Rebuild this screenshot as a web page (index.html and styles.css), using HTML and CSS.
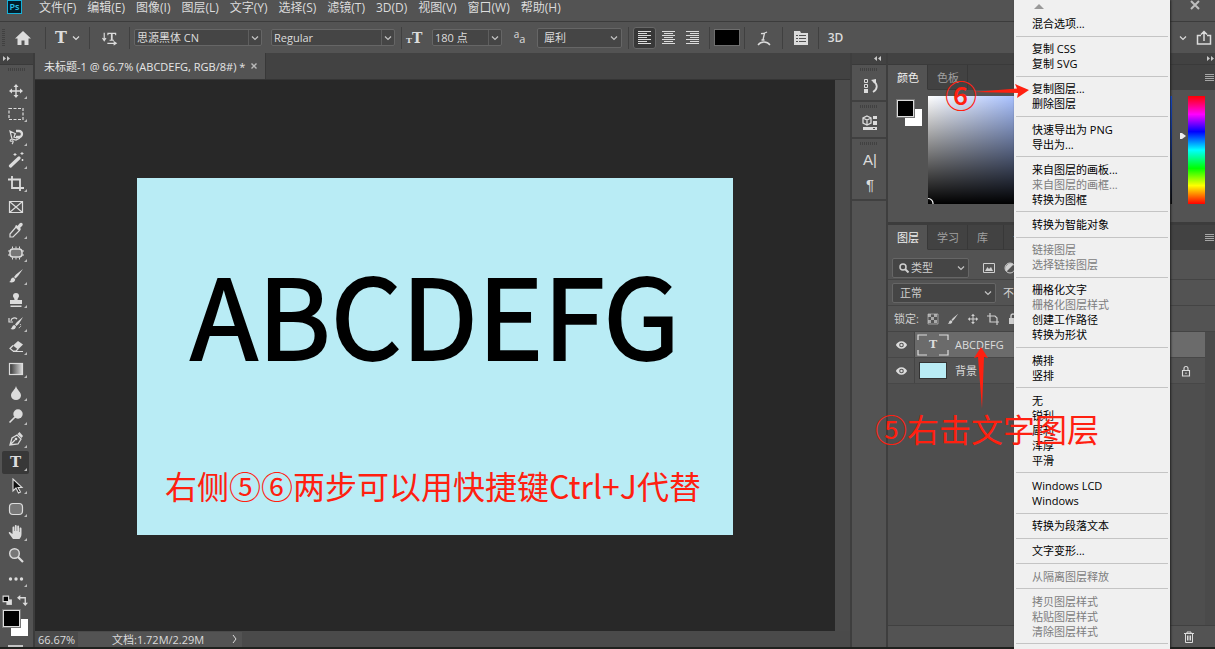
FILE: index.html
```html
<!DOCTYPE html>
<html lang="zh-CN">
<head>
  <meta charset="UTF-8">
  <meta name="viewport" content="width=device-width, initial-scale=1.0">
  <title>未标题-1 @ 66.7%</title>
  <link rel="stylesheet" href="styles.css">
</head>
<body>
  <svg class="defs" aria-hidden="true">
    <symbol id="chevron" viewBox="0 0 8 8"><path d="M1 2.5l3 3 3-3" fill="none" stroke="currentColor" stroke-width="1.2"/></symbol>
    <symbol id="menu-lines" viewBox="0 0 9 7"><path d="M0 .5h9M0 2.5h9M0 4.5h9M0 6.5h9" stroke="currentColor"/></symbol>
    <symbol id="move" viewBox="0 0 16 16"><path d="M8 1l2.5 3H8.7v3.3H12V5.5L15 8l-3 2.5V8.7H8.7V12h1.8L8 15l-2.5-3h1.8V8.7H4v1.8L1 8l3-2.5v1.8h3.3V4H5.5z"/></symbol>
    <symbol id="brush" viewBox="0 0 16 16"><path d="M15 1L8 6.500 6 9l1.500 1.500L10 8zM5.500 9.500c-2 0-2.500 1.500-2.800 2.800-.2.900-.7 1.400-1.700 1.700 3 .9 6 .4 6.200-2.700z"/></symbol>
    <symbol id="eye" viewBox="0 0 14 10"><path fill-rule="evenodd" d="M7 1C4 1 2 3 1 5c1 2 3 4 6 4s5-2 6-4c-1-2-3-4-6-4zm0 1.500a2.500 2.500 0 110 5 2.500 2.500 0 010-5z"/><circle cx="7" cy="5" r="1.300"/></symbol>
    <symbol id="lock" viewBox="0 0 12 12"><path d="M2.500 5.500h7v5.500h-7zM4 5.500V3.500a2 2 0 014 0v2M6 7.500v1.500" fill="none" stroke="currentColor" stroke-width="1.100"/></symbol>
  </svg>

  <header class="menubar">
    <span class="logo">Ps</span>
    <nav class="menus">
      <button>文件(F)</button>
      <button>编辑(E)</button>
      <button>图像(I)</button>
      <button>图层(L)</button>
      <button>文字(Y)</button>
      <button>选择(S)</button>
      <button>滤镜(T)</button>
      <button>3D(D)</button>
      <button>视图(V)</button>
      <button>窗口(W)</button>
      <button>帮助(H)</button>
    </nav>
    <button class="window-close" aria-label="关闭"><svg viewBox="0 0 10 10"><path d="M1 1l8 8M9 1L1 9" stroke="currentColor" stroke-width="2"/></svg></button>
  </header>

  <div class="options">
    <span class="grip-v"></span>
    <button class="opt home" aria-label="主页"><svg viewBox="0 0 16 16"><path d="M8 1L0 8.500h2.500V15h4v-4.500h3V15h4V8.500H16z"/></svg></button>
    <button class="opt type-tool"><span class="serif">T</span><svg class="chev"><use href="#chevron"/></svg></button>
    <button class="opt orient" aria-label="切换文本取向"><svg viewBox="0 0 18 16"><path d="M2.500 2v8M.5 8l2 3 2-3M6 14h9M13 12l3 2-3 2" fill="none" stroke="currentColor" stroke-width="1.300"/><path d="M6 2h10v3h-1l-.5-1.500H12V10h1.500v1h-5v-1H10V3.500H7.500L7 5H6z"/></svg></button>
    <span class="field font-family"><select aria-label="字体"><option>思源黑体 CN</option></select><svg class="chev"><use href="#chevron"/></svg></span>
    <span class="field font-style"><select aria-label="字体样式"><option>Regular</option></select><svg class="chev"><use href="#chevron"/></svg></span>
    <span class="opt size-icon"><small>T</small><span class="serif">T</span></span>
    <span class="field font-size"><select aria-label="字体大小"><option>180 点</option></select><svg class="chev"><use href="#chevron"/></svg></span>
    <span class="opt-plain"><sup>a</sup>a</span>
    <span class="field tall antialias"><select aria-label="消除锯齿"><option>犀利</option></select><svg class="chev"><use href="#chevron"/></svg></span>
    <div class="aligns">
      <button class="on" aria-label="左对齐"><svg viewBox="0 0 14 13"><path d="M0 .5h13M0 2.500h9M0 4.500h13M0 6.500h9M0 8.500h13M0 10.500h9M0 12.500h13" stroke="currentColor"/></svg></button>
      <button aria-label="居中对齐"><svg viewBox="0 0 14 13"><path d="M0 .5h13M2 2.500h9M0 4.500h13M2 6.500h9M0 8.500h13M2 10.500h9M0 12.500h13" stroke="currentColor"/></svg></button>
      <button aria-label="右对齐"><svg viewBox="0 0 14 13"><path d="M0 .5h13M4 2.500h9M0 4.500h13M4 6.500h9M0 8.500h13M4 10.500h9M0 12.500h13" stroke="currentColor"/></svg></button>
    </div>
    <div class="color-cell"><button class="text-color" aria-label="文本颜色"></button></div>
    <button class="opt warp" aria-label="文字变形"><svg viewBox="0 0 14 16"><path d="M4 3.500c2 .5 4-.5 6-1.500M7.500 3L6 10M4.500 10h3M1 15c3-4 9-4 12 0" fill="none" stroke="currentColor" stroke-width="1.300"/></svg></button>
    <button class="opt panels-toggle" aria-label="字符面板"><svg viewBox="0 0 16 16"><path fill-rule="evenodd" d="M1 1h6l1 2h7v12H1zM3 5v1h2V5zm3 0v1h7V5zM3 8v1h2V8zm3 0v1h7V8zM3 11v1h2v-1zm3 0v1h7v-1z"/></svg></button>
    <button class="opt three-d">3D</button>
    <div class="share">
      <svg class="chev"><use href="#chevron"/></svg>
      <button aria-label="共享"><svg viewBox="0 0 16 16"><path d="M5 5.500H1.500v8.500h13V5.500H11M8 11V2M5 4.500L8 1.500l3 3" fill="none" stroke="currentColor" stroke-width="1.500"/></svg></button>
    </div>
  </div>

  <main class="workspace">
    <aside class="toolbar">
      <div class="dock-head left"><svg viewBox="0 0 7 5"><path d="M0 0l3 2.500L0 5zM4 0l3 2.500L4 5z"/></svg></div>
      <div class="grip"></div>
      <div class="tools">
        <button aria-label="移动工具"><svg><use href="#move"/></svg></button>
        <button aria-label="矩形选框工具"><svg viewBox="0 0 16 16"><path d="M1 2.500h14v11H1z" fill="none" stroke="currentColor" stroke-width="1.200" stroke-dasharray="3 1.500"/></svg></button>
        <button aria-label="磁性套索工具"><svg viewBox="0 0 16 16"><path d="M8 5L2 2l2 8 4 1 4-2M4 10c-3 1-2 3 0 2s1 2 0 3M7 5l-1 3 3 1" fill="none" stroke="currentColor" stroke-width="1.200"/><path d="M8 2h3a3 3 0 010 6H8" fill="none" stroke="currentColor" stroke-width="2.300"/></svg></button>
        <button aria-label="魔棒工具"><svg viewBox="0 0 16 16"><path d="M2.500 14L11 6" stroke="currentColor" stroke-width="3.200" stroke-linecap="round"/><path d="M7 1v3M5.500 2.500h3M14 0v3M12.500 1.500h3M14.500 7v2M13.500 8h2" stroke="currentColor"/></svg></button>
        <button aria-label="裁剪工具"><svg viewBox="0 0 16 16"><path d="M0 3.500h12v8.500M4 0v12h12M12 12v3" fill="none" stroke="currentColor" stroke-width="1.800"/></svg></button>
        <button class="single" aria-label="图框工具"><svg viewBox="0 0 16 16"><path d="M1.500 2.500h13v11h-13zM1.500 2.500l13 11M14.500 2.500l-13 11" fill="none" stroke="currentColor" stroke-width="1.200"/></svg></button>
        <button aria-label="吸管工具"><svg viewBox="0 0 16 16"><path d="M8 5l3.500 3.500L5 15H2v-3z" fill="none" stroke="currentColor" stroke-width="1.200"/><path d="M7 4l1.500-1 1 1 2-2.500c2-2 4.500.5 2.500 2.500L12 6l1 1-1.500 2z"/></svg></button>
        <button aria-label="修补工具"><svg viewBox="0 0 16 16"><rect x="2" y="4" width="12" height="8" rx="3" fill="#777" stroke="currentColor" stroke-width="1.500"/><path d="M4.500 1.500v2M8 1.500v2M11.500 1.500v2M4.500 12.500v2M8 12.500v2M11.500 12.500v2M0 6h2M0 10h2M14 6h2M14 10h2" stroke="currentColor"/></svg></button>
        <button aria-label="画笔工具"><svg><use href="#brush"/></svg></button>
        <button aria-label="仿制图章工具"><svg viewBox="0 0 16 16"><path d="M8 1a3 3 0 00-3 3c0 1.500 1.500 2 1.500 4H2v4h12V8H9.500c0-2 1.500-2.500 1.500-4a3 3 0 00-3-3zM2.500 13.500h11V15h-11z"/></svg></button>
        <button aria-label="历史记录画笔工具"><svg viewBox="0 0 16 16"><path d="M15 2L9 7 7 9.500 8.500 11 11 8.500zM6.500 10c-2.500 0-2 3-4 4 3 .9 5 .4 5.500-2.500z"/><path d="M3 6c0-3 4-4 6-2M1 3v4h4" fill="none" stroke="currentColor" stroke-width="1.200"/><path d="M12 9c2 2 0 4-2 4" fill="none" stroke="currentColor" stroke-dasharray="1 1"/></svg></button>
        <button aria-label="橡皮擦工具"><svg viewBox="0 0 16 16"><path d="M10 3l5 3.500-5 5-5-4z"/><path d="M5 7.500L2 10.500l3 2.500h3l2-2M5 13.500h10" fill="none" stroke="currentColor" stroke-width="1.200"/></svg></button>
        <button aria-label="渐变工具"><svg viewBox="0 0 16 16"><defs><linearGradient id="grad"><stop offset="0" stop-color="#333"/><stop offset="1" stop-color="#ddd"/></linearGradient></defs><rect x="1.500" y="2.500" width="13" height="11" fill="url(#grad)" stroke="currentColor" stroke-width="1.200"/></svg></button>
        <button aria-label="模糊工具"><svg viewBox="0 0 16 16"><path d="M8 1c1 4 5 6 5 9.500a5 4.500 0 01-10 0C3 7 7 5 8 1z"/></svg></button>
        <button aria-label="减淡工具"><svg viewBox="0 0 16 16"><circle cx="10" cy="6" r="4.700"/><path d="M7 9l-5.500 5.500" stroke="currentColor" stroke-width="1.600"/></svg></button>
        <button aria-label="钢笔工具"><svg viewBox="0 0 16 16"><path d="M2 14l2-7 5-3 4 4-3 5zM2 14l5-5" fill="none" stroke="currentColor" stroke-width="1.300"/><circle cx="8" cy="8" r="1.300"/><path d="M9.500 3l2-2L15 5l-1.500 2z"/></svg></button>
        <button class="on" aria-label="横排文字工具"><span class="serif">T</span></button>
        <button aria-label="直接选择工具"><svg viewBox="0 0 16 16"><path d="M5 1v12l3-3 2.500 5 2-1L10 9.500h4z" fill="#111" stroke="currentColor" stroke-width="1.100"/></svg></button>
        <button aria-label="圆角矩形工具"><svg viewBox="0 0 16 16"><rect x="1.500" y="2.500" width="13" height="11" rx="3.500" fill="#777" stroke="currentColor" stroke-width="1.200"/></svg></button>
        <button aria-label="抓手工具"><svg viewBox="0 0 16 16"><path d="M5 15L1 9.500C0 8 2 7.500 3 9l1.500 1V3.500c0-1.500 1.800-1.500 1.800 0V7h.5V2c0-1.500 1.900-1.500 1.900 0v5h.5V2.500c0-1.500 1.900-1.500 1.900 0V8h.5V4.500c0-1.500 1.900-1.500 1.900 0V10c0 3-1.500 4-2 5z"/></svg></button>
        <button class="single" aria-label="缩放工具"><svg viewBox="0 0 16 16"><circle cx="6.500" cy="6.500" r="4.800" fill="#777" stroke="currentColor" stroke-width="1.400"/><path d="M10 10l5 5" stroke="currentColor" stroke-width="2.200"/></svg></button>
        <button aria-label="编辑工具栏"><svg viewBox="0 0 16 16"><circle cx="2.500" cy="8" r="1.700"/><circle cx="8" cy="8" r="1.700"/><circle cx="13.500" cy="8" r="1.700"/></svg></button>
      </div>
      <div class="swatch-tools">
        <svg viewBox="0 0 10 10"><path d="M4 4h5v5H4z"/><path d="M1 1h5v5H1z" fill="#000" stroke="currentColor"/></svg>
        <svg viewBox="0 0 10 10"><path d="M2 2.500h5.500V8" fill="none" stroke="currentColor" stroke-width="1.200"/><path d="M3 0v5L0 2.500zM5 7h5L7.500 10z"/></svg>
      </div>
      <div class="swatches"><span class="bg"></span><span class="fg"></span></div>
      <div class="mask-mode"></div>
    </aside>

    <section class="document">
      <div class="doc-tabs">
        <div class="doc-tab">未标题-1 @ 66.7% (ABCDEFG, RGB/8#) * <button aria-label="关闭文档"><svg viewBox="0 0 6 6"><path d="M.5 .5l5 5M5.500 .5l-5 5" stroke="currentColor" stroke-width="1.400"/></svg></button></div>
      </div>
      <div class="doc-body">
        <div class="canvas">
          <div class="artboard">
            <span class="big-text">ABCDEFG</span>
            <span class="note-text">右侧⑤⑥两步可以用快捷键Ctrl+J代替</span>
          </div>
        </div>
        <div class="scrollbar"></div>
      </div>
      <div class="status">
        <span class="zoom">66.67%</span>
        <div class="doc-size">
          <span>文档:1.72M/2.29M</span>
          <svg viewBox="0 0 6 10"><path d="M1 1l3 4-3 4" fill="none" stroke="currentColor"/></svg>
        </div>
      </div>
    </section>

    <aside class="icon-dock">
      <div class="dock-head"><svg viewBox="0 0 7 5"><path d="M3 0L0 2.500 3 5zM7 0L4 2.500 7 5z"/></svg></div>
      <div class="icon-group">
        <div class="grip"></div>
        <button aria-label="历史记录"><svg viewBox="0 0 16 16"><path d="M2.500 1.500h3v3h-3zM2.500 6.500h3v3h-3z" fill="none" stroke="currentColor"/><path d="M2 11h4v4H2zM9 2l5-1v5z"/><path d="M11 3c5 3 5 8 0 11" fill="none" stroke="currentColor" stroke-width="1.800"/></svg></button>
      </div>
      <div class="icon-group">
        <div class="grip"></div>
        <button aria-label="库"><svg viewBox="0 0 16 16"><path d="M5 1l4 2v5l-4 2-4-2V3zM1 3l4 2 4-2M5 5v5" fill="none" stroke="currentColor" stroke-width="1.300"/><path d="M11 1h4v3h-4zM11 6h4v4h-4z"/><path fill-rule="evenodd" d="M1 12h14v3H1zM11 13v1h2v-1z"/></svg></button>
      </div>
      <div class="icon-group">
        <div class="grip"></div>
        <button class="char">A|</button>
        <button class="char">¶</button>
      </div>
    </aside>

    <aside class="panels">
      <div class="dock-head right"><svg viewBox="0 0 7 5"><path d="M0 0l3 2.500L0 5zM4 0l3 2.500L4 5z"/></svg></div>
      <section class="panel color-panel">
        <div class="tabs">
          <button class="tab active">颜色</button>
          <button class="tab">色板</button>
          <svg class="panel-menu"><use href="#menu-lines"/></svg>
        </div>
        <div class="color-body">
          <div class="swatches"><span class="bg"></span><span class="fg"></span></div>
          <div class="spectrum"><svg viewBox="0 0 7 7"><path d="M0 1.500a5 5 0 015 5.500" fill="none" stroke="#fff" stroke-width="1.200"/></svg></div>
          <svg class="hue-mark" viewBox="0 0 6 8"><path d="M0 1h2l4 3-4 3H0z" fill="#eee"/></svg>
          <div class="hue"></div>
        </div>
      </section>
      <section class="panel layers-panel">
        <div class="tabs">
          <button class="tab active">图层</button>
          <button class="tab">学习</button>
          <button class="tab">库</button>
          <button class="tab">调整</button>
          <svg class="panel-menu"><use href="#menu-lines"/></svg>
        </div>
        <div class="row filter-row">
          <span class="field tall kind"><svg class="search" viewBox="0 0 10 10"><circle cx="4" cy="4" r="3" fill="none" stroke="currentColor" stroke-width="1.500"/><path d="M6 6l3.500 3.500" stroke="currentColor" stroke-width="2"/></svg><select aria-label="图层过滤"><option>类型</option></select><svg class="chev"><use href="#chevron"/></svg></span>
          <svg class="ico" viewBox="0 0 12 12"><path d="M.5 1.500h11v9H.5z" fill="none" stroke="currentColor"/><path d="M2 9l2.500-4L6 7l2-2 2 4z"/></svg>
          <svg class="ico" viewBox="0 0 12 12"><circle cx="6" cy="6" r="5" fill="none" stroke="currentColor"/><path d="M9.500 2.500a5 5 0 00-7 7z"/></svg>
        </div>
        <div class="row blend-row">
          <span class="field tall blend"><select aria-label="混合模式"><option>正常</option></select><svg class="chev"><use href="#chevron"/></svg></span>
          <span>不透明度:</span>
        </div>
        <div class="row lock-row">
          <span>锁定:</span>
          <svg class="ico" viewBox="0 0 12 12"><path d="M1 1h10v10H1z" fill="none" stroke="currentColor" opacity=".6"/><path d="M1 1h3v3H1zM7 1h3v3H7zM4 4h3v3H4zM1 7h3v3H1zM7 7h3v3H7z" opacity=".7"/></svg>
          <svg class="ico"><use href="#brush"/></svg>
          <svg class="ico"><use href="#move"/></svg>
          <svg class="ico" viewBox="0 0 12 12"><path d="M0 3h8l2 2v4M3 0v9h9M10 9v3" fill="none" stroke="currentColor" stroke-width="1.200"/></svg>
          <svg class="ico" viewBox="0 0 12 12"><path d="M2 5h8v6H2z"/><path d="M4 5V3a2 2 0 014 0v2" fill="none" stroke="currentColor" stroke-width="1.400"/></svg>
        </div>
        <ul class="layers">
          <li class="layer selected">
            <button class="eye" aria-label="显示图层"><svg><use href="#eye"/></svg></button>
            <span class="thumb type-thumb"><svg viewBox="0 0 32 22"><path d="M1 6V1h9M22 1h9v5M31 16v5h-9M10 21H1v-5" fill="none" stroke="currentColor" stroke-width="1.200"/></svg><span class="serif">T</span></span>
            <span class="name">ABCDEFG</span>
          </li>
          <li class="layer">
            <button class="eye" aria-label="显示图层"><svg><use href="#eye"/></svg></button>
            <span class="thumb"><span class="fill-thumb"></span></span>
            <span class="name">背景</span>
            <svg class="locked"><use href="#lock"/></svg>
          </li>
        </ul>
        <div class="panel-foot"><button aria-label="删除图层"><svg viewBox="0 0 12 12"><path d="M1 2.500h10M4 2.500V1h4v1.500M2.500 2.500v9h7v-9M4.500 4.500v5M6 4.500v5M7.500 4.500v5" fill="none" stroke="currentColor"/></svg></button></div>
      </section>
    </aside>
  </main>

  <div class="context-menu" role="menu">
    <div class="scroll-up"><svg viewBox="0 0 10 5"><path d="M0 5l5-5 5 5z" fill="#999"/></svg></div>
    <button>混合选项...</button>
    <hr>
    <button>复制 CSS</button>
    <button>复制 SVG</button>
    <hr>
    <button>复制图层...</button>
    <button>删除图层</button>
    <hr>
    <button>快速导出为 PNG</button>
    <button>导出为...</button>
    <hr>
    <button>来自图层的画板...</button>
    <button disabled>来自图层的画框...</button>
    <button>转换为图框</button>
    <hr>
    <button>转换为智能对象</button>
    <hr>
    <button disabled>链接图层</button>
    <button disabled>选择链接图层</button>
    <hr>
    <button>栅格化文字</button>
    <button disabled>栅格化图层样式</button>
    <button>创建工作路径</button>
    <button>转换为形状</button>
    <hr>
    <button>横排</button>
    <button>竖排</button>
    <hr>
    <button>无</button>
    <button>锐利</button>
    <button>犀利</button>
    <button>浑厚</button>
    <button>平滑</button>
    <hr>
    <button>Windows LCD</button>
    <button>Windows</button>
    <hr>
    <button>转换为段落文本</button>
    <hr>
    <button>文字变形...</button>
    <hr>
    <button disabled>从隔离图层释放</button>
    <hr>
    <button disabled>拷贝图层样式</button>
    <button disabled>粘贴图层样式</button>
    <button disabled>清除图层样式</button>
    <hr>
  </div>

  <!-- tutorial marks on top of everything -->
  <span class="mark step-six">⑥</span>
  <svg class="mark arrow-right" viewBox="0 0 56 14"><path d="M0 8l44-3.500L42 0l14 6-12 8 1-5z"/></svg>
  <svg class="mark arrow-up" viewBox="0 0 14 62"><path d="M7 0l7 11-4-1-2 52-4-52-4 1z"/></svg>
  <span class="mark step-five">⑤右击文字图层</span>
</body>
</html>
```
FILE: styles.css
```css
* {
  box-sizing: border-box;
}
body {
  margin: 0;
  height: 100vh;
  display: flex;
  flex-direction: column;
  position: relative;
  overflow: hidden;
  background: #1f211e;
  color: #dcdcdc;
  font-family: "Open Sans", "Noto Sans CJK SC", sans-serif;
  font-size: 11px;
  line-height: 15px;
}
button, select {
  font: inherit;
  color: inherit;
  background: none;
  border: 0;
  padding: 0;
  margin: 0;
  border-radius: 0;
}
select {
  appearance: none;
}
svg {
  display: block;
  fill: currentColor;
  flex: none;
}
.defs {
  display: none;
}
.serif {
  font-family: "DejaVu Serif", serif;
  font-weight: bold;
}
.chev {
  width: 8px;
  height: 8px;
}

/* menu bar */
.menubar {
  display: flex;
  align-items: flex-start;
  height: 22px;
  flex: none;
  padding-left: 7px;
  background: #535353;
  border-bottom: 1px solid #3c3c3c;
}
.logo {
  width: 15px;
  height: 14px;
  border: 1px solid #16b1da;
  background: #001d2b;
  color: #2cc5ee;
  font-size: 9px;
  font-weight: 600;
  line-height: 12px;
  text-align: center;
}
.menus {
  display: flex;
  gap: 11px;
  margin-left: 17px;
  font-size: 12px;
}
.window-close {
  margin-left: auto;
  margin-right: 15px;
  color: #bdbdbd;
}
.window-close svg {
  width: 10px;
  height: 10px;
}

/* options bar */
.options {
  display: flex;
  align-items: center;
  height: 31px;
  flex: none;
  background: #535353;
}
.grip-v {
  width: 3px;
  height: 17px;
  margin: 0 3px 0 2px;
  background: repeating-linear-gradient(#414141 0 1px, transparent 1px 2px);
}
.opt {
  display: flex;
  align-items: center;
  justify-content: center;
  height: 22px;
  border-right: 1px solid #404040;
}
.opt svg {
  width: 16px;
  height: 16px;
}
.opt .chev {
  width: 8px;
  height: 8px;
}
.home {
  width: 38px;
  padding-right: 8px;
}
.type-tool {
  width: 44px;
  gap: 5px;
}
.type-tool .serif {
  font-size: 16px;
}
.orient {
  width: 40px;
  margin-right: 4px;
}
.field {
  display: flex;
  align-items: center;
  height: 17px;
  padding-right: 2px;
  background: #454545;
  border: 1px solid #666;
  border-radius: 2px;
}
.field select {
  flex: 1;
  min-width: 0;
  padding-left: 2px;
  align-self: stretch;
}
.field .chev {
  color: #c4c4c4;
}
.field.tall {
  height: 20px;
  padding-right: 3px;
}
.font-family {
  width: 128px;
  margin-right: 9px;
}
.font-style {
  width: 124px;
}
.font-family select,
.font-style select,
.font-size select {
  border-right: 1px solid #5e5e5e;
  margin-right: 2px;
}
.size-icon {
  width: 31px;
  margin-left: 6px;
  border-left: 1px solid #404040;
  border-right: 0;
  justify-content: flex-start;
  padding-left: 4px;
  align-items: baseline;
}
.size-icon small {
  font-family: "DejaVu Serif", serif;
  font-size: 8px;
  font-weight: bold;
}
.size-icon .serif {
  font-size: 14px;
  line-height: 22px;
}
.font-size {
  width: 70px;
}
.opt-plain {
  width: 35px;
  text-align: center;
  line-height: 12px;
}
.opt-plain sup {
  font-size: 10px;
  line-height: 8px;
}
.antialias {
  width: 85px;
  margin-right: 6px;
}
.antialias select {
  padding-left: 6px;
}
.aligns {
  display: flex;
  gap: 1px;
  height: 22px;
  padding: 0 5px 0 4px;
  border-left: 1px solid #404040;
  border-right: 1px solid #404040;
}
.aligns button {
  width: 23px;
  display: flex;
  align-items: center;
  justify-content: center;
  border-radius: 3px;
}
.aligns .on {
  background: #383838;
  border: 1px solid #686868;
}
.aligns svg {
  width: 14px;
  height: 13px;
}
.color-cell {
  display: flex;
  align-items: center;
  height: 22px;
  padding: 0 4px;
  border-right: 1px solid #404040;
}
.text-color {
  width: 26px;
  height: 17px;
  background: #000;
  border: 1px solid #6e6e6e;
}
.warp {
  width: 38px;
}
.panels-toggle {
  width: 36px;
}
.three-d {
  width: 33px;
  border-right: 0;
  font-size: 12px;
  font-weight: 600;
}
.share {
  display: flex;
  align-items: center;
  gap: 9px;
  margin-left: auto;
  padding-right: 3px;
}
.share button svg {
  width: 16px;
  height: 16px;
}

/* work area */
.workspace {
  display: flex;
  flex: 1;
  min-height: 0;
  margin-bottom: 2px;
  background: #535353;
}
.dock-head {
  display: flex;
  align-items: center;
  justify-content: flex-end;
  height: 12px;
  flex: none;
  padding: 0 5px;
  background: #424242;
  border-bottom: 1px solid #3a3a3a;
  color: #c8c8c8;
}
.dock-head.left {
  justify-content: flex-start;
  padding: 0 3px;
}
.dock-head.right {
  padding: 0 1px;
}
.dock-head svg {
  width: 7px;
  height: 5px;
}
.grip {
  width: 18px;
  height: 3px;
  flex: none;
  margin: 3px auto 0;
  background: repeating-linear-gradient(90deg, #414141 0 1px, transparent 1px 2px);
}
.toolbar {
  display: flex;
  flex-direction: column;
  width: 35px;
  flex: none;
  border-right: 2px solid #3c3c3c;
}
.tools {
  display: flex;
  flex-direction: column;
  flex: 1;
  margin: 8px 4px 5px 2px;
}
.tools button {
  position: relative;
  display: flex;
  align-items: center;
  justify-content: center;
  flex: 1;
  min-height: 0;
}
.tools button::after {
  content: "";
  position: absolute;
  right: 2px;
  bottom: 3px;
  border-left: 3px solid transparent;
  border-bottom: 3px solid #bbb;
}
.tools .single::after {
  display: none;
}
.tools .on {
  background: #383838;
  border-radius: 2px;
}
.tools .serif {
  font-size: 15px;
}
.tools svg {
  width: 16px;
  height: 16px;
}
.swatch-tools {
  display: flex;
  gap: 4px;
  padding-left: 2px;
}
.swatch-tools svg {
  width: 11px;
  height: 11px;
}
.swatches {
  display: grid;
  grid-template: 9px 17px / 8px 17px;
  flex: none;
}
.swatches span {
  width: 17px;
  height: 17px;
}
.swatches .fg {
  grid-area: 1 / 1;
  background: #000;
  border: 1px solid #dcdcdc;
  outline: 1px solid #777;
}
.swatches .bg {
  grid-area: 2 / 2;
  background: #fff;
}
.toolbar .swatches {
  padding: 4px 0 0 3px;
}
.mask-mode {
  width: 15px;
  height: 2px;
  margin: 9px 0 0 8px;
  background: #c4c4c4;
}

/* document */
.document {
  display: flex;
  flex-direction: column;
  flex: 1;
  min-width: 0;
}
.doc-tabs {
  display: flex;
  height: 27px;
  flex: none;
  background: #424242;
  border-bottom: 1px solid #353535;
}
.doc-tab {
  display: flex;
  align-items: center;
  gap: 6px;
  padding: 0 8px 0 9px;
  background: #535353;
  border-right: 1px solid #383838;
  color: #e6e6e6;
}
.doc-tab svg {
  width: 6px;
  height: 6px;
  color: #bbb;
}
.doc-body {
  display: flex;
  flex: 1;
  min-height: 0;
}
.canvas {
  display: flex;
  align-items: center;
  justify-content: center;
  flex: 1;
  padding-top: 2px;
  background: #282828;
}
.artboard {
  position: relative;
  display: flex;
  align-items: center;
  justify-content: center;
  width: 74.5%;
  aspect-ratio: 5 / 3;
  padding-bottom: 90px;
  background: #b9ecf5;
}
.big-text {
  color: #000;
  font-family: "Noto Sans CJK SC", sans-serif;
  font-size: 111px;
  font-weight: 400;
  line-height: 120px;
  -webkit-text-stroke: 2px #000;
  stroke-linejoin: round;
}
.note-text {
  position: absolute;
  left: 28px;
  bottom: 30px;
  color: #ff2010;
  font-family: "Noto Sans CJK SC", sans-serif;
  font-size: 32px;
  line-height: 40px;
  white-space: nowrap;
}
.scrollbar {
  width: 15px;
  background: #4b4b4b;
}
.status {
  display: flex;
  align-items: center;
  height: 16px;
  flex: none;
  background: #4a4a4a;
}
.zoom {
  width: 43px;
  padding-left: 3px;
}
.doc-size {
  display: flex;
  align-items: center;
  gap: 28px;
  padding: 0 4px 0 34px;
  background: #535353;
}
.status svg {
  width: 6px;
  height: 10px;
}

/* collapsed dock */
.icon-dock {
  width: 38px;
  flex: none;
  border: solid #3e3e3e;
  border-width: 0 2px;
}
.icon-group {
  padding-bottom: 2px;
  border-bottom: 2px solid #404040;
}
.icon-group .grip {
  margin-bottom: 2px;
}
.icon-group button {
  display: flex;
  align-items: center;
  justify-content: center;
  width: 100%;
  height: 25px;
  padding-left: 2px;
}
.icon-group svg {
  width: 16px;
  height: 16px;
}
.icon-group .char {
  font-family: "Liberation Sans", sans-serif;
  font-size: 15px;
}

/* panels */
.panels {
  display: flex;
  flex-direction: column;
  width: 327px;
  flex: none;
}
.panel {
  display: flex;
  flex-direction: column;
}
.tabs {
  display: flex;
  height: 25px;
  flex: none;
  background: #424242;
}
.tab {
  min-width: 36px;
  padding: 0 8px 0 9px;
  color: #a0a0a0;
  border-right: 1px solid #383838;
  border-bottom: 1px solid #3a3a3a;
  text-align: left;
}
.tab.active {
  color: #f0f0f0;
  background: #535353;
  border-bottom-color: #535353;
}
.panel-menu {
  width: 9px;
  height: 7px;
  margin: 9px 1px 0 auto;
  color: #a8a8a8;
}
.color-panel {
  border-bottom: 3px solid #3c3c3c;
}
.color-body {
  display: flex;
  align-items: flex-start;
  padding: 6px 10px 18px 9px;
}
.color-body .swatches {
  margin-top: 4px;
}
.spectrum {
  display: flex;
  align-items: flex-end;
  flex: 1;
  height: 108px;
  margin-left: 6px;
  background: linear-gradient(to top, #000, transparent), linear-gradient(to right, #fff, #0a50ff);
}
.spectrum svg {
  width: 7px;
  height: 7px;
}
.hue-mark {
  width: 6px;
  height: 8px;
  margin: 36px 2px 0 8px;
}
.hue {
  width: 17px;
  height: 108px;
  background: linear-gradient(#f00, #f0f 17%, #00f 33%, #0ff 50%, #0f0 67%, #ff0 83%, #f00);
}
.layers-panel {
  flex: 1;
}
.row {
  display: flex;
  align-items: center;
  height: 26px;
  flex: none;
  padding-left: 4px;
  border-bottom: 1px solid #444;
  white-space: nowrap;
  color: #cfcfcf;
}
.filter-row {
  height: 30px;
  gap: 9px;
  padding-top: 6px;
}
.kind {
  width: 77px;
  margin-right: 5px;
  padding-left: 6px;
}
.search {
  width: 10px;
  height: 10px;
}
.blend {
  width: 104px;
  margin-right: 7px;
}
.blend select {
  padding-left: 7px;
}
.ico {
  width: 12px;
  height: 12px;
}
.lock-row {
  gap: 8px;
  padding-left: 6px;
}
.layers {
  flex: 1;
  margin: 0;
  padding: 0 10px 0 0;
  list-style: none;
  background: linear-gradient(#4a4a4a, #4a4a4a) right / 10px no-repeat #4e4e4e;
}
.layer {
  display: flex;
  align-items: center;
  height: 26px;
  background: #535353;
  border-bottom: 1px solid #474747;
}
.layer.selected {
  background: linear-gradient(#535353, #535353) left / 27px no-repeat #6b6b6b;
}
.eye {
  display: flex;
  align-items: center;
  justify-content: center;
  width: 27px;
  align-self: stretch;
  border-right: 1px solid #444;
}
.eye svg {
  width: 13px;
  height: 10px;
}
.thumb {
  display: grid;
  place-items: center;
  width: 40px;
  padding-right: 4px;
}
.type-thumb > * {
  grid-area: 1 / 1;
}
.type-thumb svg {
  width: 32px;
  height: 22px;
}
.type-thumb .serif {
  font-size: 11px;
}
.fill-thumb {
  width: 28px;
  height: 17px;
  background: #b9ecf5;
  border: 1px solid #333;
}
.locked {
  width: 12px;
  height: 12px;
  margin-left: auto;
  margin-right: 13px;
}
.panel-foot {
  display: flex;
  align-items: center;
  justify-content: flex-end;
  height: 22px;
  flex: none;
  padding-right: 20px;
  border-top: 1px solid #404040;
}
.panel-foot svg {
  width: 12px;
  height: 12px;
}

/* context menu */
.context-menu {
  position: absolute;
  top: 0;
  bottom: 0;
  right: 45px;
  width: 156px;
  display: flex;
  flex-direction: column;
  background: #f0f0f0;
  box-shadow: 1px 0 2px #222;
  color: #000;
}
.scroll-up {
  height: 16px;
  flex: none;
  padding: 4px 0 0 20px;
}
.scroll-up svg {
  width: 10px;
  height: 5px;
}
.context-menu button {
  height: 15px;
  flex: none;
  padding-left: 18px;
  text-align: left;
}
.context-menu button:disabled {
  color: #7d7d7d;
}
.context-menu hr {
  flex: 1;
  width: 152px;
  margin: 0 auto;
  border: 0;
  background: linear-gradient(#c4c4c4, #c4c4c4) center / 100% 1px no-repeat;
}

/* tutorial marks */
.mark {
  position: absolute;
  color: #ff2010;
  font-family: "Noto Sans CJK SC", sans-serif;
  font-size: 32px;
  line-height: 40px;
  white-space: nowrap;
}
.step-six {
  top: 74px;
  right: 238px;
  font-weight: 500;
}
.step-five {
  top: 408px;
  right: 116px;
}
.arrow-right {
  top: 84px;
  right: 186px;
  width: 56px;
  height: 14px;
}
.arrow-up {
  top: 347px;
  right: 227px;
  width: 14px;
  height: 62px;
}
```
